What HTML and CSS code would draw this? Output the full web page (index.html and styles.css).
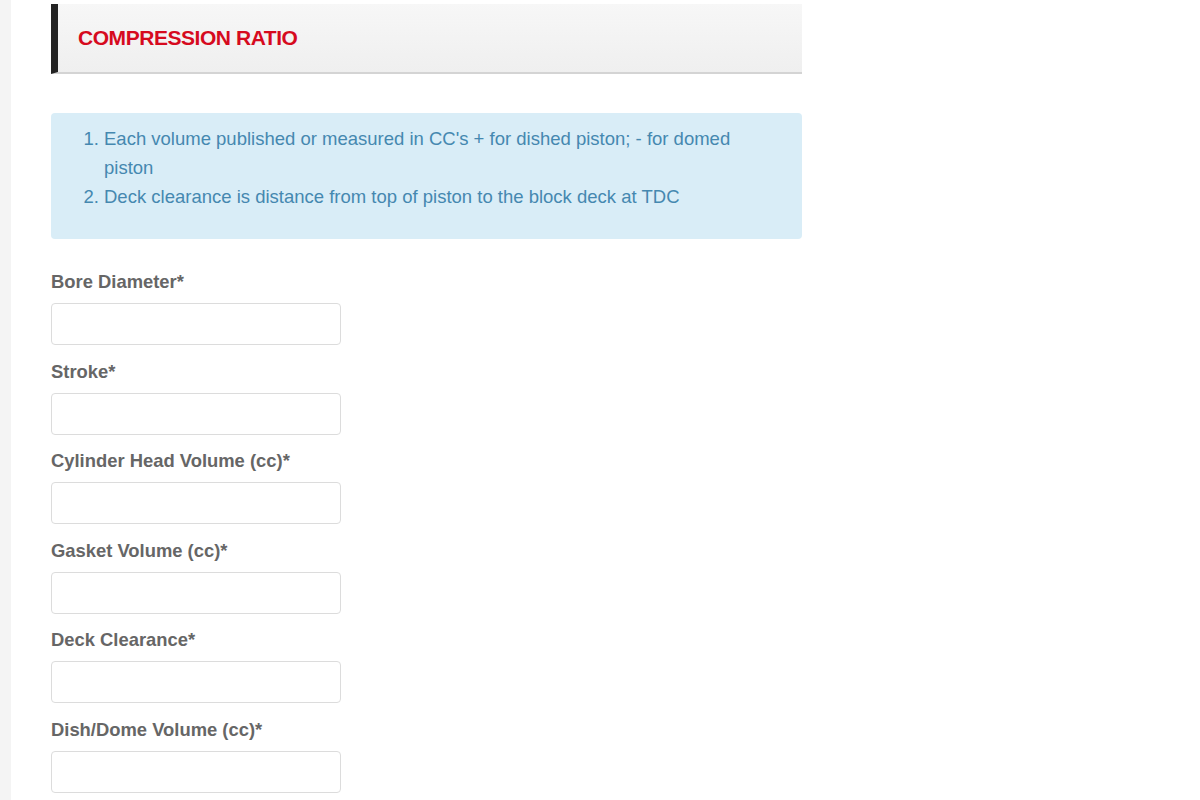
FILE: index.html
```html
<!DOCTYPE html>
<html lang="en">
<head>
<meta charset="utf-8">
<title>Compression Ratio</title>
<link rel="stylesheet" href="styles.css">
</head>
<body>
<div class="page">
  <div class="side-strip"></div>
  <main class="content">
    <div class="section-header">
      <h2 class="section-title">COMPRESSION RATIO</h2>
    </div>
    <div class="alert-info">
      <ol class="notes">
        <li>Each volume published or measured in CC's + for dished piston; - for domed piston</li>
        <li>Deck clearance is distance from top of piston to the block deck at TDC</li>
      </ol>
    </div>
    <form class="calc-form">
      <div class="field">
        <label class="field-label">Bore Diameter*</label>
        <input class="field-input" type="text">
      </div>
      <div class="field">
        <label class="field-label">Stroke*</label>
        <input class="field-input" type="text">
      </div>
      <div class="field">
        <label class="field-label">Cylinder Head Volume (cc)*</label>
        <input class="field-input" type="text">
      </div>
      <div class="field">
        <label class="field-label">Gasket Volume (cc)*</label>
        <input class="field-input" type="text">
      </div>
      <div class="field">
        <label class="field-label">Deck Clearance*</label>
        <input class="field-input" type="text">
      </div>
      <div class="field">
        <label class="field-label">Dish/Dome Volume (cc)*</label>
        <input class="field-input" type="text">
      </div>
    </form>
  </main>
</div>
</body>
</html>
```

FILE: styles.css
```css
* { box-sizing: border-box; }
html, body { margin: 0; padding: 0; background: #fff; }
body {
  font-family: "Liberation Sans", Arial, sans-serif;
  overflow: hidden;
  height: 800px;
}
.page {
  display: flex;
  min-height: 800px;
}
.side-strip {
  width: 11px;
  flex: none;
  background: #f4f4f4;
}
.content {
  padding-left: 40px;
  padding-top: 4px;
  width: 791px;
  flex: none;
}
.section-header {
  height: 70px;
  border-left: 7px solid #232323;
  border-bottom: 2px solid #d4d4d4;
  background: linear-gradient(#f7f7f7, #efefef);
  display: flex;
  align-items: center;
  padding-left: 20px;
}
.section-title {
  margin: 0;
  font-size: 21px;
  font-weight: bold;
  color: #d60a1e;
  letter-spacing: -0.45px;
}
.alert-info {
  margin-top: 39px;
  background: #d9edf7;
  border-radius: 4px;
  color: #4588b0;
  height: 126px;
  padding: 11px 20px 0 0;
}
.notes {
  margin: 0;
  padding-left: 53px;
  font-size: 18.5px;
  line-height: 29px;
}
.calc-form {
  margin-top: 33px;
}
.field {
  margin-bottom: 16.5px;
}
.field-label {
  display: block;
  font-size: 18.4px;
  line-height: 20px;
  font-weight: bold;
  color: #666;
  margin-bottom: 11px;
}
.field-input {
  display: block;
  width: 290px;
  height: 42px;
  border: 1px solid #dcdcdc;
  border-radius: 4px;
  background: #fff;
  margin: 0;
}
```
